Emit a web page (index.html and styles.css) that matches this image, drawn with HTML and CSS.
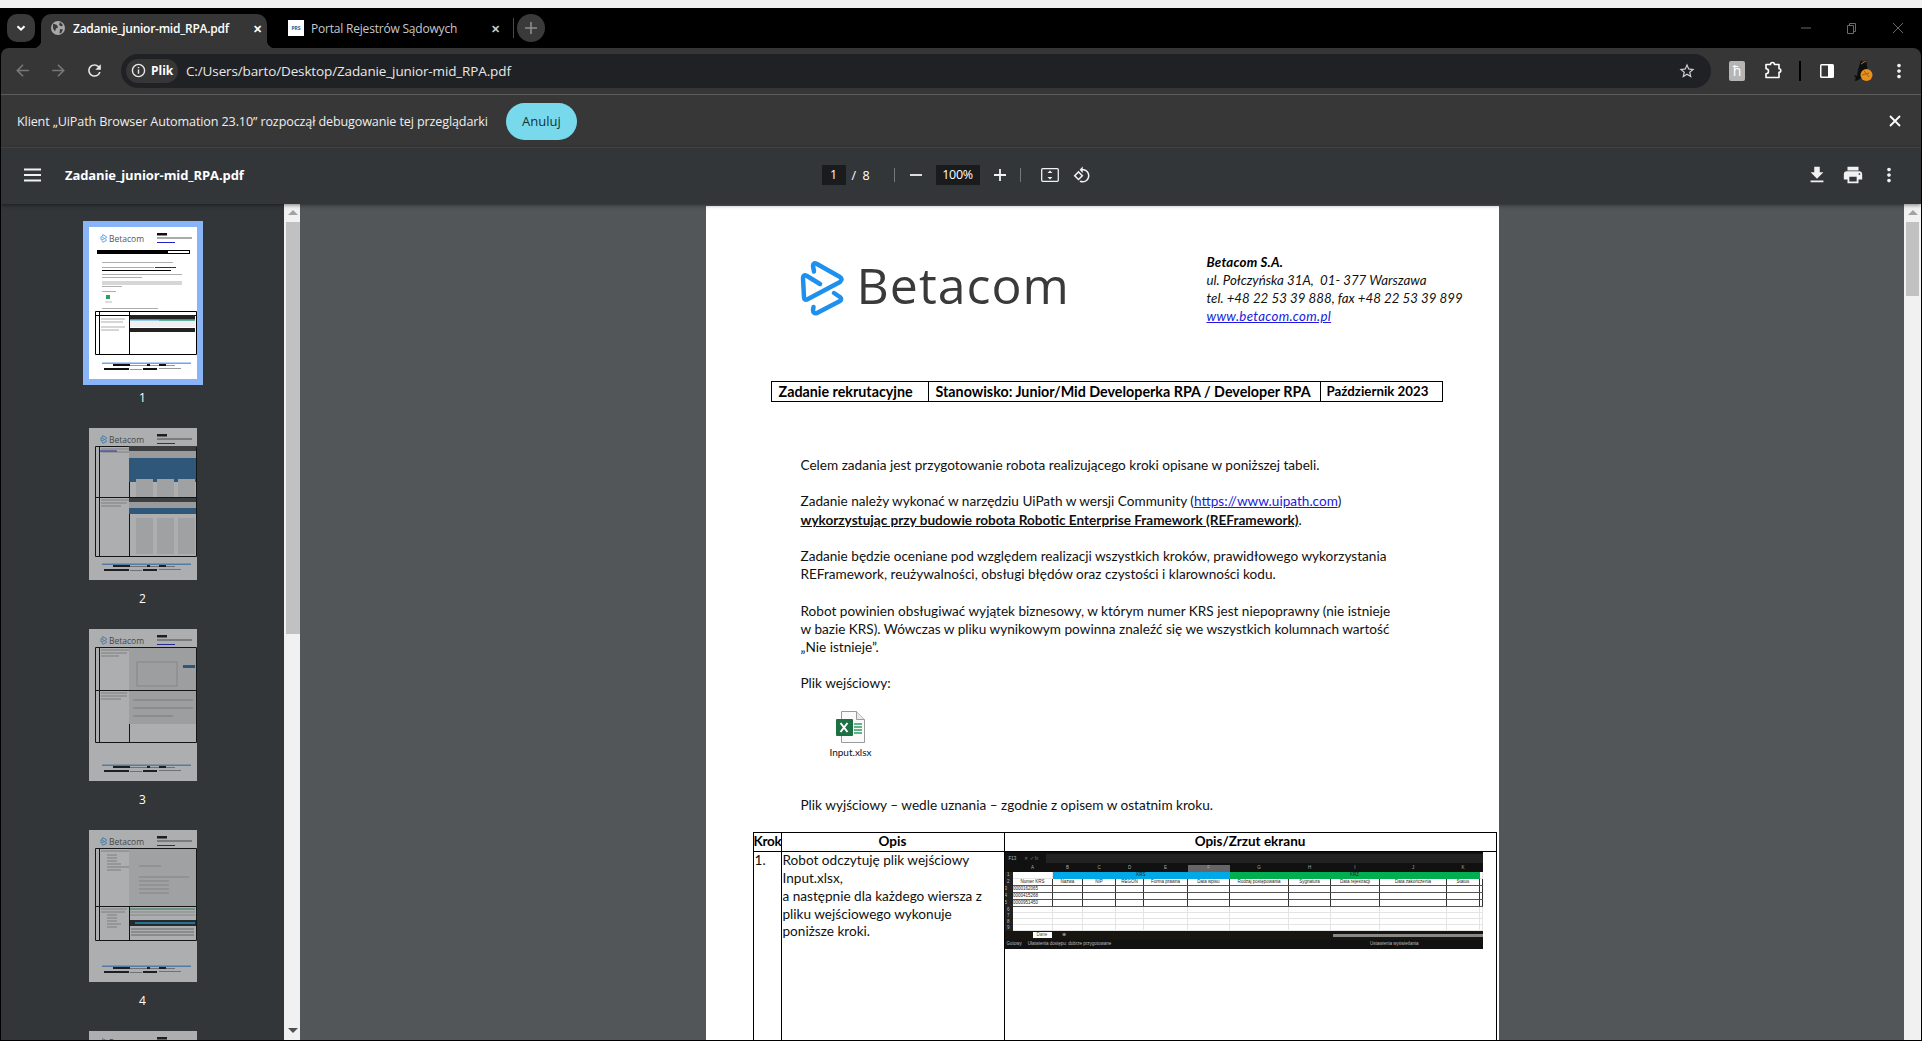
FILE: index.html
```html
<!DOCTYPE html>
<html lang="pl">
<head>
  <meta charset="UTF-8">
  <title>Zadanie_junior-mid_RPA.pdf</title>
  <link rel="stylesheet" href="styles.css">
</head>
<body>
  <svg class="sprite">
    <defs>
      <path id="logo-mark" d="M24 19.500L23 14q0-4 4-2l23 13q3 2 0 5L18 47q-4 2-4-2l-1-19q0-4 4-2l13 8M44 41l6 4q2 2 0 4L27 61q-4 1-4-3l.5-3" fill="none" stroke-linecap="round" stroke-linejoin="round"/>
      <symbol id="thumb-head" viewBox="0 0 108 152">
        <use href="#logo-mark" transform="translate(10 6) scale(.15)" stroke="#4a9be8" stroke-width="6"/>
        <text x="20" y="15" class="thumb-logo">Betacom</text>
        <rect x="68" y="6" width="10" height="2.500" fill="#111"/>
        <rect x="68" y="10" width="35" height="2" fill="#aaa"/>
        <rect x="68" y="15" width="18" height="1" fill="#2222cc"/>
      </symbol>
      <symbol id="thumb-foot" viewBox="0 0 108 152">
        <rect x="13" y="135.500" width="89" height="1.500" fill="#6fa8e8"/>
        <rect x="24" y="137" width="17" height="2" fill="#111"/>
        <rect x="41" y="138" width="45" height="1" fill="#999"/>
        <rect x="58" y="137" width="3" height="2" fill="#111"/>
        <rect x="70" y="137" width="7" height="2" fill="#111"/>
        <rect x="15" y="141" width="25" height="2" fill="#111"/>
        <rect x="41" y="142" width="12" height="1" fill="#999"/>
        <rect x="54" y="141" width="14" height="2" fill="#111"/>
        <rect x="70" y="141" width="22" height="1" fill="#999"/>
      </symbol>
      <symbol id="back" viewBox="0 0 24 24"><path d="M20 11H7.830l5.590-5.590L12 4l-8 8 8 8 1.410-1.410L7.830 13H20v-2z"/></symbol>
      <symbol id="dots" viewBox="0 0 24 24"><path d="M12 8c1.100 0 2-.9 2-2s-.9-2-2-2-2 .9-2 2 .9 2 2 2zm0 2c-1.100 0-2 .9-2 2s.9 2 2 2 2-.9 2-2-.9-2-2-2zm0 6c-1.100 0-2 .9-2 2s.9 2 2 2 2-.9 2-2-.9-2-2-2z"/></symbol>
    </defs>
  </svg>

  <div class="top-strip"></div>

  <header class="tabstrip">
    <button class="tab-search">
      <svg width="12" height="12" viewBox="0 0 12 12"><path d="M2.500 4.200L6 7.700l3.500-3.500" fill="none" stroke="#fff" stroke-width="2"/></svg>
    </button>
    <div class="tab tab-active">
      <svg class="favicon" width="16" height="16" viewBox="0 0 16 16"><circle cx="8" cy="8" r="7" fill="#a9a9a9"/><path d="M3 3.500l4 1.500 1 2.500-2 1-1 3-2-3zM10 2l3 3-1.500 1.500L9 5zM10 9l3 .5-2 4-1.500-.5z" fill="#3a3a3a"/></svg>
      <span class="tab-title">Zadanie_junior-mid_RPA.pdf</span>
      <span class="tab-close">✕</span>
    </div>
    <div class="tab">
      <span class="favicon prs-icon">PRS</span>
      <span class="tab-title tab-title-dim">Portal Rejestrów Sądowych</span>
      <span class="tab-close tab-close-dim">✕</span>
    </div>
    <span class="tab-sep"></span>
    <button class="new-tab">
      <svg width="14" height="14" viewBox="0 0 14 14"><path d="M7 1v12M1 7h12" stroke="#8d8d8d" stroke-width="1.600"/></svg>
    </button>
    <div class="win-controls">
      <svg width="46" height="16" viewBox="0 0 46 16"><path d="M18 8h10" stroke="#6b6b6b"/></svg>
      <svg width="46" height="16" viewBox="0 0 46 16"><path d="M18.500 5.500h6v8h-6zM20.500 5.500v-2h6v8h-2" fill="none" stroke="#6b6b6b"/></svg>
      <svg width="46" height="16" viewBox="0 0 46 16"><path d="M18 3l10 10M28 3L18 13" stroke="#6b6b6b"/></svg>
    </div>
  </header>

  <nav class="toolbar">
    <button class="tool-btn"><svg class="ic ic-off" viewBox="0 0 24 24"><use href="#back"/></svg></button>
    <button class="tool-btn"><svg class="ic ic-off ic-flip" viewBox="0 0 24 24"><use href="#back"/></svg></button>
    <button class="tool-btn"><svg class="ic" viewBox="0 0 24 24"><path d="M17.650 6.350A7.958 7.958 0 0 0 12 4c-4.420 0-7.990 3.580-7.990 8s3.570 8 7.990 8c3.730 0 6.840-2.550 7.730-6h-2.080A5.990 5.990 0 0 1 12 18c-3.310 0-6-2.690-6-6s2.690-6 6-6c1.660 0 3.140.690 4.220 1.780L13 11h7V4l-2.350 2.350z"/></svg></button>
    <div class="omnibox">
      <div class="chip">
        <svg width="15" height="15" viewBox="0 0 16 16"><circle cx="8" cy="8" r="6.500" fill="none" stroke="#e8e8e8" stroke-width="1.500"/><path d="M8 7v4.500M8 4.300v1.400" stroke="#e8e8e8" stroke-width="1.500"/></svg>
        <b>Plik</b>
      </div>
      <span class="url">C:/Users/barto/Desktop/Zadanie_junior-mid_RPA.pdf</span>
      <svg class="star" viewBox="0 0 24 24"><path d="M22 9.240l-7.190-.620L12 2 9.190 8.630 2 9.240l5.460 4.730L5.820 21 12 17.270 18.180 21l-1.630-7.030L22 9.240zM12 15.400l-3.760 2.270 1-4.280-3.320-2.880 4.380-.380L12 6.100l1.710 4.040 4.380.380-3.320 2.880 1 4.280L12 15.400z"/></svg>
    </div>
    <button class="tool-btn"><span class="ext-icon">ħ</span></button>
    <button class="tool-btn">
      <svg width="18" height="20" viewBox="0 0 18 20"><path d="M2 3.500h4.500a2 2 0 0 1 4 0H15v4.200a1.800 1.800 0 0 1 0 3.600v5.200H2v-3.800a2.400 2.400 0 0 0 0-5z" fill="none" stroke="#fff" stroke-width="1.600" stroke-linejoin="round"/></svg>
    </button>
    <span class="tool-sep"></span>
    <button class="tool-btn">
      <svg width="16" height="16" viewBox="0 0 16 16"><rect x="1" y="1" width="14" height="14" rx="1.500" fill="#fff"/><rect x="2.500" y="2.500" width="6.500" height="11" fill="#363636"/></svg>
    </button>
    <button class="tool-btn">
      <svg width="22" height="24" viewBox="0 0 22 24"><path d="M9 1l2 2 3-2 1 6 1 6-8 7-4 2-2-1 2-1-2-4 3 1 1-6z" fill="#0e0e0e"/><path d="M9 5l5-3" stroke="#b5701c"/><circle cx="14.500" cy="16" r="6" fill="#e8901c"/><path d="M12 12l5 6M10 16l7-2" stroke="#a8600f"/></svg>
    </button>
    <button class="tool-btn"><svg class="ic ic-dots" viewBox="0 0 24 24"><use href="#dots"/></svg></button>
  </nav>

  <div class="infobar">
    <span>Klient „UiPath Browser Automation 23.10” rozpoczął debugowanie tej przeglądarki</span>
    <button class="cancel-btn">Anuluj</button>
    <svg class="info-close" width="12" height="12" viewBox="0 0 12 12"><path d="M1 1l10 10M11 1L1 11" stroke="#fff" stroke-width="1.800"/></svg>
  </div>

  <div class="pdf-toolbar">
    <div class="pdf-left">
      <svg width="18" height="14" viewBox="0 0 18 14"><path d="M0 1.500h17M0 7h17M0 12.500h17" stroke="#f1f1f1" stroke-width="2"/></svg>
      <span class="pdf-title">Zadanie_junior-mid_RPA.pdf</span>
    </div>
    <div class="pdf-center">
      <span class="num-box num-page">1</span>
      <span class="page-total">/&nbsp;&nbsp;8</span>
      <span class="pdf-sep pdf-sep-a"></span>
      <svg class="zoom-ic" width="14" height="14" viewBox="0 0 14 14"><path d="M1 7h12" stroke="#f1f1f1" stroke-width="1.800"/></svg>
      <span class="num-box num-zoom">100%</span>
      <svg class="zoom-ic" width="14" height="14" viewBox="0 0 14 14"><path d="M1 7h12M7 1v12" stroke="#f1f1f1" stroke-width="1.800"/></svg>
      <span class="pdf-sep pdf-sep-b"></span>
      <svg class="fit-ic" width="18" height="14" viewBox="0 0 18 14"><rect x=".7" y=".7" width="16.600" height="12.600" rx="1" fill="none" stroke="#f1f1f1" stroke-width="1.300"/><path d="M9 2.500l2.500 2.500h-5zM9 11.500l2.500-2.500h-5z" fill="#f1f1f1"/></svg>
      <svg class="rot-ic" width="18" height="18" viewBox="0 0 24 24"><path fill="#f1f1f1" d="M7.340 6.410L.86 12.900l6.490 6.480 6.490-6.480-6.500-6.490zM3.690 12.900l3.660-3.660L11 12.900l-3.660 3.660-3.650-3.660zm15.670-6.260C17.610 4.880 15.300 4 13 4V.76L8.760 5 13 9.240V6c1.790 0 3.580.680 4.950 2.050 2.730 2.730 2.730 7.170 0 9.900C16.580 19.320 14.790 20 13 20c-.970 0-1.940-.210-2.840-.610l-1.490 1.490C10.020 21.620 11.510 22 13 22c2.300 0 4.610-.880 6.360-2.640 3.520-3.510 3.520-9.210 0-12.720z"/></svg>
    </div>
    <div class="pdf-right">
      <svg class="pdf-ic" viewBox="0 0 24 24"><path d="M19 9h-4V3H9v6H5l7 7 7-7zM5 18v2h14v-2H5z"/></svg>
      <svg class="pdf-ic" viewBox="0 0 24 24"><path d="M19 8H5c-1.660 0-3 1.340-3 3v6h4v4h12v-4h4v-6c0-1.660-1.340-3-3-3zm-3 11H8v-5h8v5zm3-7c-.550 0-1-.450-1-1s.450-1 1-1 1 .450 1 1-.450 1-1 1zm-1-9H6v4h12V3z"/></svg>
      <svg class="pdf-ic" viewBox="0 0 24 24"><use href="#dots"/></svg>
    </div>
  </div>

  <div class="viewer">
    <aside class="sidebar">
      <div class="thumb-item">
        <div class="thumb thumb-selected">
          <svg viewBox="0 0 108 152">
            <use href="#thumb-head"/>
            <rect x="8" y="23" width="93" height="4" fill="#000"/>
            <rect x="79" y="24" width="21" height="2" fill="#fff"/>
            <path d="M13 35.500h71M13 40.500h52M13 47.500h80M13 50.500h40M13 55h80M13 57h80M13 59.500h20M13 64.500h14M13 81.500h56" stroke="#777" stroke-width=".6"/>
            <path d="M66 40.500h21" stroke="#2222cc" stroke-width="1"/>
            <path d="M13 43.500h69" stroke="#000" stroke-width="1"/>
            <rect x="17" y="68" width="4" height="4" fill="#2f9e5f"/>
            <path d="M16 75h7" stroke="#bbb"/>
            <path d="M6.500 84.500h101v43H6.500zM10.500 84.500v43M40.500 84.500v43M6.500 88.500h101" fill="none" stroke="#000"/>
            <path d="M12 92h24M12 95h22M12 100h24M12 103h18" stroke="#777" stroke-width=".6"/>
            <rect x="41" y="88" width="65" height="4" fill="#222"/>
            <rect x="41" y="92" width="65" height="1.500" fill="#2b9ad4"/>
            <rect x="70" y="92" width="36" height="1.500" fill="#2ca05a"/>
            <path d="M41 95h65M41 97h65M41 99h65" stroke="#ccc" stroke-width=".6"/>
            <rect x="41" y="101" width="65" height="4" fill="#222"/>
            <use href="#thumb-foot"/>
          </svg>
        </div>
        <span class="thumb-num">1</span>
      </div>
      <div class="thumb-item">
        <div class="thumb">
          <svg viewBox="0 0 108 152">
            <use href="#thumb-head"/>
            <path d="M6.500 18.500h101v110H6.500zM10.500 18.500v110M40.500 18.500v110M6.500 69.500h101" fill="none" stroke="#000"/>
            <path d="M12 21h30M12 24h28M12 72h30M12 75h26M12 78h20" stroke="#777" stroke-width=".6"/>
            <path d="M11 23h17" stroke="#2222cc"/>
            <rect x="40" y="18" width="67" height="5" fill="#444"/>
            <rect x="40" y="23" width="67" height="7" fill="#ddd"/>
            <rect x="40" y="30" width="67" height="24" fill="#2e6da4"/>
            <rect x="47" y="51" width="17" height="18" fill="#e8e8e8"/>
            <rect x="68" y="51" width="17" height="18" fill="#e8e8e8"/>
            <rect x="89" y="51" width="17" height="18" fill="#e8e8e8"/>
            <rect x="40" y="70" width="67" height="4" fill="#444"/>
            <rect x="40" y="74" width="67" height="6" fill="#ddd"/>
            <rect x="40" y="80" width="67" height="6" fill="#2e6da4"/>
            <rect x="47" y="90" width="17" height="36" fill="#e8e8e8"/>
            <rect x="68" y="90" width="17" height="36" fill="#e8e8e8"/>
            <rect x="89" y="90" width="17" height="36" fill="#e8e8e8"/>
            <use href="#thumb-foot"/>
          </svg>
        </div>
        <span class="thumb-num">2</span>
      </div>
      <div class="thumb-item">
        <div class="thumb">
          <svg viewBox="0 0 108 152">
            <use href="#thumb-head"/>
            <path d="M6.500 18.500h101v95H6.500zM10.500 18.500v95M40.500 18.500v95M6.500 61.500h101" fill="none" stroke="#000"/>
            <path d="M12 21h28M12 24h26M12 27h18M12 64h26M12 67h26M12 70h20" stroke="#777" stroke-width=".6"/>
            <rect x="40" y="19" width="67" height="42" fill="#e4e4e4"/>
            <rect x="40" y="62" width="67" height="33" fill="#e4e4e4"/>
            <rect x="48" y="33" width="40" height="24" fill="none" stroke="#bbb"/>
            <rect x="94" y="36" width="12" height="3" fill="#2e6da4"/>
            <path d="M44 71h60M44 79h60M44 87h40" stroke="#aaa"/>
            <use href="#thumb-foot"/>
          </svg>
        </div>
        <span class="thumb-num">3</span>
      </div>
      <div class="thumb-item">
        <div class="thumb">
          <svg viewBox="0 0 108 152">
            <use href="#thumb-head"/>
            <path d="M6.500 18.500h101v92H6.500zM10.500 18.500v92M40.500 18.500v92M6.500 76.500h101" fill="none" stroke="#000"/>
            <path d="M12 21h28M18 25h10M18 28h10M18 31h10M18 34h14M18 37h24M18 40h14M12 79h26M12 82h24M18 85h10M18 88h10M18 91h10M18 94h14M18 97h10" stroke="#777" stroke-width=".6"/>
            <rect x="40" y="19" width="67" height="57" fill="#e8e8e8"/>
            <path d="M50 36h22M50 47h50M50 51h30M50 55h30M50 59h30M50 63h30" stroke="#999" stroke-width=".6"/>
            <path d="M41 79h65" stroke="#2ca05a"/>
            <path d="M41 82h65M41 85h65" stroke="#bbb"/>
            <rect x="41" y="90" width="66" height="6" fill="#222"/>
            <rect x="46" y="92" width="60" height="2" fill="#1d9ad4"/>
            <path d="M42 99h63M42 102h63M42 105h63" stroke="#888"/>
            <use href="#thumb-foot"/>
          </svg>
        </div>
        <span class="thumb-num">4</span>
      </div>
      <div class="thumb-item">
        <div class="thumb">
          <svg viewBox="0 0 108 152"><use href="#thumb-head"/></svg>
        </div>
      </div>
    </aside>

    <div class="scrollbar scrollbar-left">
      <span class="arrow-up"></span>
      <span class="scroll-thumb thumb-left"></span>
      <span class="arrow-down"></span>
    </div>

    <main class="pdf-main">
      <article class="page">
        <section class="letterhead">
          <div class="logo">
            <svg class="logo-icon" width="66" height="70" viewBox="0 0 66 70"><use href="#logo-mark" stroke="#1e90ee" stroke-width="4.500"/></svg>
            <span class="logo-text">Betacom</span>
          </div>
          <address class="company">
            <b>Betacom S.A.</b><br>
            ul. Połczyńska 31A,&nbsp; 01- 377 Warszawa<br>
            tel. +48 22 53 39 888, fax +48 22 53 39 899<br>
            <a href="#">www.betacom.com.pl</a>
          </address>
        </section>

        <table class="job-table">
          <tr>
            <td class="job-a">Zadanie rekrutacyjne</td>
            <td class="job-b">Stanowisko: Junior/Mid Developerka RPA / Developer RPA</td>
            <td class="job-c">Październik 2023</td>
          </tr>
        </table>

        <div class="body-text">
          <p>Celem zadania jest przygotowanie robota realizującego kroki opisane w poniższej tabeli.</p>
          <p>Zadanie należy wykonać w narzędziu UiPath w wersji Community (<a href="#">https://www.uipath.com</a>)<br>
          <b class="underline">wykorzystując przy budowie robota Robotic Enterprise Framework (REFramework)</b>.</p>
          <p>Zadanie będzie oceniane pod względem realizacji wszystkich kroków, prawidłowego wykorzystania<br>
          REFramework, reużywalności, obsługi błędów oraz czystości i klarowności kodu.</p>
          <p>Robot powinien obsługiwać wyjątek biznesowy, w którym numer KRS jest niepoprawny (nie istnieje<br>
          w bazie KRS). Wówczas w pliku wynikowym powinna znaleźć się we wszystkich kolumnach wartość<br>
          „Nie istnieje”.</p>
          <p>Plik wejściowy:</p>
          <div class="attachment">
            <svg width="30" height="32" viewBox="0 0 30 32"><path d="M5.500 .5h15l8 8v23h-23z" fill="#fafafa" stroke="#9a9a9a"/><path d="M20.500 .5v8h8" fill="#e8e8e8" stroke="#9a9a9a"/><path d="M18 13h8M18 16h8M18 19h8M18 22h8" stroke="#2f9e5f" stroke-width="1.500"/><rect x="0" y="8" width="17" height="17" rx="1" fill="#1d7044"/><path d="M4.500 12l7 9M11.500 12l-7 9" stroke="#fff" stroke-width="2"/></svg>
            <span>Input.xlsx</span>
          </div>
          <p>Plik wyjściowy – wedle uznania – zgodnie z opisem w ostatnim kroku.</p>
        </div>

        <table class="steps">
          <tr>
            <th class="col-step">Krok</th>
            <th class="col-desc">Opis</th>
            <th>Opis/Zrzut ekranu</th>
          </tr>
          <tr class="step-row">
            <td class="step-no">1.</td>
            <td>Robot odczytuję plik wejściowy Input.xlsx,<br>a następnie dla każdego wiersza z pliku wejściowego wykonuje poniższe kroki.</td>
            <td class="shot-cell">
              <div class="sheet">
                <div class="sheet-formula"><span>F13</span><span class="formula-marks">✕ ✓ fx</span><span class="formula-input"></span></div>
                <table class="sheet-grid">
                  <colgroup>
                    <col class="c-h"><col class="c-a"><col class="c-b"><col class="c-c"><col class="c-d"><col class="c-e"><col class="c-f"><col class="c-g"><col class="c-i-h"><col class="c-i"><col class="c-j"><col class="c-k"><col class="c-x">
                  </colgroup>
                  <tr class="sheet-cols"><td></td><td>A</td><td>B</td><td>C</td><td>D</td><td>E</td><td class="col-sel">F</td><td>G</td><td>H</td><td>I</td><td>J</td><td>K</td><td></td></tr>
                  <tr><td class="rh">1</td><td></td><td colspan="5" class="band-blue">KRS</td><td colspan="5" class="band-green">KRZ</td><td></td></tr>
                  <tr class="sheet-head"><td class="rh">2</td><td>Numer KRS</td><td>Nazwa</td><td>NIP</td><td>REGON</td><td>Forma prawna</td><td>Data wpisu</td><td>Rodzaj postępowania</td><td>Sygnatura</td><td>Data rejestracji</td><td>Data zakończenia</td><td>Status</td><td></td></tr>
                  <tr class="sheet-data"><td class="rh">3</td><td>0000162065</td><td></td><td></td><td></td><td></td><td></td><td></td><td></td><td></td><td></td><td></td><td></td></tr>
                  <tr class="sheet-data"><td class="rh">4</td><td>0000415268</td><td></td><td></td><td></td><td></td><td></td><td></td><td></td><td></td><td></td><td></td><td></td></tr>
                  <tr class="sheet-data"><td class="rh">5</td><td>0000951450</td><td></td><td></td><td></td><td></td><td></td><td></td><td></td><td></td><td></td><td></td><td></td></tr>
                  <tr class="sheet-empty"><td class="rh">6</td><td></td><td></td><td></td><td></td><td></td><td></td><td></td><td></td><td></td><td></td><td></td><td></td></tr>
                  <tr class="sheet-empty"><td class="rh">7</td><td></td><td></td><td></td><td></td><td></td><td></td><td></td><td></td><td></td><td></td><td></td><td></td></tr>
                  <tr class="sheet-empty"><td class="rh">8</td><td></td><td></td><td></td><td></td><td></td><td></td><td></td><td></td><td></td><td></td><td></td><td></td></tr>
                  <tr class="sheet-empty"><td class="rh">9</td><td></td><td></td><td></td><td></td><td></td><td></td><td></td><td></td><td></td><td></td><td></td><td></td></tr>
                </table>
                <div class="sheet-tabs"><span class="sheet-tab">Dane</span><span class="sheet-plus">⊕</span><span class="sheet-hscroll"></span></div>
                <div class="sheet-status"><span>Gotowy</span><span>Ułatwienia dostępu: dobrze przygotowane</span><span class="sheet-status-r">Ustawienia wyświetlania</span></div>
              </div>
            </td>
          </tr>
        </table>
      </article>
    </main>

    <div class="scrollbar scrollbar-right">
      <span class="arrow-up"></span>
      <span class="scroll-thumb thumb-right"></span>
    </div>
  </div>
</body>
</html>
```

FILE: styles.css
```css
* {
  box-sizing: border-box;
}

html, body {
  margin: 0;
  height: 100%;
  overflow: hidden;
}

body {
  display: flex;
  flex-direction: column;
  background: #000;
  padding: 0 1px 1px;
  font-family: "Open Sans", "Noto Sans", sans-serif;
  color: #fff;
}

button {
  border: none;
  background: none;
  padding: 0;
  font: inherit;
}

.sprite {
  display: none;
}

.top-strip {
  flex: none;
  height: 8px;
  margin: 0 -1px;
  background: #f1f1f1;
}

/* tabs */
.tabstrip {
  flex: none;
  height: 40px;
  display: flex;
  padding: 6px 0 0 6px;
  background: #000;
}

.tab-search {
  width: 28px;
  height: 28px;
  margin-right: 6px;
  border-radius: 10px;
  background: #3a3a3a;
  display: flex;
  align-items: center;
  justify-content: center;
}

.tab {
  position: relative;
  width: 226px;
  height: 34px;
  margin-right: 12px;
  padding: 0 1px 6px 9px;
  display: flex;
  align-items: center;
  border-radius: 10px 10px 0 0;
  font-size: 12px;
}

.tab-active {
  background: #363636;
}

.tab-active::before,
.tab-active::after {
  content: "";
  position: absolute;
  bottom: 0;
  width: 8px;
  height: 8px;
}

.tab-active::before {
  left: -8px;
  background: radial-gradient(circle at 0 0, transparent 8px, #363636 8.5px);
}

.tab-active::after {
  right: -8px;
  background: radial-gradient(circle at 100% 0, transparent 8px, #363636 8.5px);
}

.favicon {
  flex: none;
  width: 16px;
  height: 16px;
  margin-right: 7px;
}

.prs-icon {
  background: #fff;
  color: #2a5a8a;
  font-size: 5px;
  font-weight: 700;
  line-height: 16px;
  text-align: center;
}

.tab-title {
  flex: 1;
  white-space: nowrap;
  font-weight: 600;
  letter-spacing: -.26px;
}

.tab-title-dim {
  font-weight: 400;
  color: #c8c8c8;
  letter-spacing: -.2px;
}

.tab-close {
  font-size: 11px;
  font-weight: 700;
  width: 16px;
  text-align: center;
  margin-right: 1px;
}

.tab-close-dim {
  color: #c8c8c8;
}

.tab-sep {
  width: 1px;
  height: 20px;
  margin: 4px 3px 0 -4px;
  background: #4a4a4a;
}

.new-tab {
  width: 28px;
  height: 28px;
  border-radius: 50%;
  background: #3a3a3a;
  display: flex;
  align-items: center;
  justify-content: center;
}

.win-controls {
  margin-left: auto;
  margin-top: 6px;
  display: flex;
  height: 16px;
}

/* address bar */
.toolbar {
  flex: none;
  height: 47px;
  display: flex;
  align-items: center;
  padding: 0 4px 1px 3px;
  background: #363636;
  border-bottom: 1px solid #5c5c5c;
  border-radius: 8px 8px 0 0;
}

.tool-btn {
  flex: none;
  width: 36px;
  height: 36px;
  display: flex;
  align-items: center;
  justify-content: center;
}

.ic {
  width: 19px;
  height: 19px;
  fill: #e8e8e8;
}

.ic-off {
  fill: #777;
}

.ic-flip {
  transform: scaleX(-1);
}

.ic-dots {
  width: 22px;
  height: 22px;
  fill: #f1f1f1;
}

.omnibox {
  flex: 1;
  height: 34px;
  margin: 0 8px 0 9px;
  padding: 0 15px 0 5px;
  display: flex;
  align-items: center;
  border-radius: 17px;
  background: #202124;
}

.chip {
  height: 24px;
  width: 52px;
  padding-left: 5px;
  margin-right: 8px;
  display: flex;
  align-items: center;
  gap: 5px;
  border-radius: 12px;
  background: #363636;
  font-size: 12px;
}

.url {
  flex: 1;
  font-size: 13.500px;
  color: #e8e8e8;
  letter-spacing: -.13px;
}

.star {
  width: 18px;
  height: 18px;
  fill: #d0d0d0;
}

.ext-icon {
  width: 16px;
  height: 20px;
  border-radius: 2px;
  background: #b5b5b5;
  color: #fff;
  font-size: 14px;
  line-height: 20px;
  text-align: center;
}

.tool-sep {
  flex: none;
  width: 2px;
  height: 20px;
  margin: 0 8px;
  background: #000;
}

/* debug notice */
.infobar {
  flex: none;
  height: 53px;
  display: flex;
  align-items: center;
  padding: 0 20px 0 16px;
  background: #373737;
  border-bottom: 1px solid #4a4a4a;
  font-size: 12.600px;
  letter-spacing: -.13px;
  color: #eee;
}

.cancel-btn {
  width: 71px;
  height: 37px;
  margin-left: 18px;
  border-radius: 19px;
  background: #78d9ec;
  color: #12323a;
  font-size: 13px;
}

.info-close {
  margin-left: auto;
}

/* pdf toolbar */
.pdf-toolbar {
  position: relative;
  flex: none;
  height: 56px;
  padding-bottom: 2px;
  display: grid;
  grid-template-columns: 1fr auto 1fr;
  align-items: center;
  background: #323639;
  box-shadow: 0 1px 4px rgba(0, 0, 0, .5);
}

.pdf-left {
  display: flex;
  align-items: center;
  padding-left: 23px;
  gap: 23px;
}

.pdf-title {
  font-size: 13px;
  font-weight: 700;
  letter-spacing: -.1px;
}

.pdf-center {
  display: flex;
  align-items: center;
  margin-right: 10px;
  font-size: 12.500px;
}

.num-box {
  height: 20px;
  line-height: 20px;
  background: #191b1c;
  text-align: center;
}

.num-page {
  width: 24px;
}

.num-zoom {
  width: 44px;
  margin: 0 13px;
  letter-spacing: -.3px;
}

.page-total {
  width: 48px;
  padding-left: 6px;
}

.pdf-sep {
  width: 1px;
  height: 14px;
  background: #777;
}

.pdf-sep-a {
  margin-right: 14px;
}

.pdf-sep-b {
  margin: 0 20px 0 13px;
}

.zoom-ic {
  flex: none;
}

.fit-ic {
  margin-right: 14px;
}

.pdf-right {
  display: flex;
  justify-content: flex-end;
  gap: 14px;
  padding-right: 21px;
}

.pdf-ic {
  width: 22px;
  height: 22px;
  fill: #f1f1f1;
}

/* viewer */
.viewer {
  flex: 1;
  min-height: 0;
  display: flex;
  background: #525659;
}

.sidebar {
  flex: none;
  width: 283px;
  padding-top: 23px;
  overflow: hidden;
  display: flex;
  flex-direction: column;
  align-items: center;
  background: #323639;
}

.thumb-item {
  flex: none;
  display: flex;
  flex-direction: column;
  align-items: center;
}

.thumb {
  width: 108px;
  height: 152px;
  background: #fff;
  opacity: .6;
}

.thumb svg {
  display: block;
  width: 108px;
  height: 152px;
}

.thumb-selected {
  opacity: 1;
  outline: 6px solid #8ab4f8;
}

.thumb-logo {
  font-family: "Open Sans", sans-serif;
  font-size: 8.500px;
  fill: #555;
}

.thumb-num {
  height: 49px;
  padding-top: 11px;
  font-size: 12px;
  line-height: 16px;
}

.scrollbar {
  flex: none;
  display: flex;
  flex-direction: column;
  align-items: center;
  padding-top: 4px;
  background: #f1f1f1;
}

.scrollbar-left {
  width: 16px;
  padding-left: 2px;
}

.scrollbar-right {
  width: 17px;
}

.arrow-up {
  flex: none;
  width: 0;
  height: 0;
  margin: 2px 0 7px;
  border: 5px solid transparent;
  border-top: 0;
  border-bottom-color: #a3a3a3;
}

.arrow-down {
  flex: none;
  width: 0;
  height: 0;
  margin: auto 0 7px;
  border: 5px solid transparent;
  border-bottom: 0;
  border-top-color: #505050;
}

.scroll-thumb {
  flex: none;
  width: 13px;
  background: #c1c1c1;
}

.thumb-left {
  width: 14px;
  height: 412px;
}

.thumb-right {
  height: 74px;
}

.pdf-main {
  flex: 1;
  min-width: 0;
  display: flex;
  justify-content: center;
  overflow: hidden;
}

/* document */
.page {
  flex: none;
  width: 793px;
  height: 1122px;
  margin-top: 2px;
  background: #fff;
  color: #111;
  font-family: Lato, "Open Sans", sans-serif;
  font-size: 13.600px;
  line-height: 18.200px;
}

.letterhead {
  display: grid;
  grid-template-columns: 417px auto;
  padding: 46px 0 0 84px;
}

.logo {
  display: flex;
  align-items: center;
}

.logo-icon {
  margin-top: -4px;
}

.logo-text {
  margin: -8px 0 0 1px;
  font-family: "Open Sans", sans-serif;
  font-size: 50px;
  line-height: 70px;
  letter-spacing: 1px;
  color: #3a3a3a;
}

.company {
  margin-top: 1px;
  font-size: 13.300px;
  line-height: 18px;
}

.company b {
  color: #000;
  letter-spacing: .2px;
}

.company a {
  letter-spacing: .3px;
}

a {
  color: #1a1ae0;
}

.job-table {
  width: 672px;
  height: 21px;
  margin: 56px 0 0 65px;
  border-collapse: collapse;
  table-layout: fixed;
  font-weight: 700;
  font-size: 14.300px;
  line-height: 17px;
  color: #000;
}

.job-table td {
  padding: 0 0 0 7px;
  border: 1px solid #000;
  white-space: nowrap;
}

.job-a {
  width: 157px;
}

.job-b {
  width: 392px;
}

.job-table .job-c {
  font-size: 13.300px;
  padding-left: 6px;
}

.body-text {
  margin: 54px 0 0 95px;
}

.body-text p {
  margin: 0 0 18.200px;
  white-space: nowrap;
}

.underline {
  text-decoration: underline;
}

.attachment {
  width: 44px;
  margin: 0 0 37px 28px;
  display: flex;
  flex-direction: column;
  align-items: center;
  font-size: 10px;
  line-height: 14px;
}

.attachment svg {
  margin-bottom: 2px;
}

.steps {
  width: 744px;
  margin: 7px 0 0 47px;
  border-collapse: collapse;
  table-layout: fixed;
  color: #111;
  line-height: 17.800px;
}

.steps th,
.steps td {
  border: 1.500px solid #000;
  padding: 0 1px;
  vertical-align: top;
}

.steps th {
  height: 19px;
  font-size: 13.500px;
  line-height: 17px;
  font-weight: 700;
  text-align: center;
  color: #000;
}

.steps .col-step {
  width: 28px;
  padding: 0;
  letter-spacing: -.3px;
  text-align: left;
}

.col-desc {
  width: 223px;
}

.step-row {
  height: 400px;
}

.step-no {
  padding-left: 1px;
}

.steps .shot-cell {
  padding: 0;
}

/* excel screenshot in the table */
.sheet {
  width: 478px;
  height: 97px;
  display: flex;
  flex-direction: column;
  background: #111;
  color: #bbb;
  font-family: "Liberation Sans", sans-serif;
  font-size: 4.500px;
  line-height: 6px;
  overflow: hidden;
}

.sheet-formula {
  flex: none;
  height: 13px;
  display: flex;
  align-items: center;
  gap: 8px;
  padding: 0 0 0 4px;
}

.formula-marks {
  color: #777;
}

.formula-input {
  flex: 1;
  height: 9px;
  background: #222;
}

.sheet-grid {
  flex: none;
  width: 478px;
  border-collapse: collapse;
  table-layout: fixed;
  background: #fff;
}

.steps .sheet-grid td {
  height: 7px;
  padding: 0;
  border: 0;
  border-right: 1px solid #e4e4e4;
  border-bottom: 1px solid #e4e4e4;
  color: #222;
  text-align: center;
  vertical-align: middle;
  line-height: 5px;
  overflow: hidden;
  white-space: nowrap;
}

.steps .sheet-grid .sheet-cols td,
.steps .sheet-grid .sheet-empty td {
  height: 6px;
}

.c-h { width: 8px; }
.c-a { width: 40px; }
.c-b { width: 30px; }
.c-c { width: 33px; }
.c-d { width: 28px; }
.c-e { width: 44px; }
.c-f { width: 42px; }
.c-g { width: 59px; }
.c-i-h { width: 42px; }
.c-i { width: 49px; }
.c-j { width: 67px; }
.c-k { width: 33px; }

.steps .sheet-grid .sheet-cols td {
  background: #111;
  color: #aaa;
  border-color: #111;
}

.steps .sheet-grid .sheet-cols .col-sel {
  background: #666;
  border-color: #666;
}

.steps .sheet-grid .rh {
  background: #222;
  color: #bbb;
  border-color: #222;
}

.steps .sheet-grid .band-blue {
  background: #00a8e8;
  border-color: #00a8e8;
}

.steps .sheet-grid .band-green {
  background: #00ad4f;
  border-color: #00ad4f;
}

.steps .sheet-head td,
.steps .sheet-data td {
  border-right-color: #333;
  border-bottom-color: #555;
}

.steps .sheet-data td {
  text-align: left;
}

.sheet-tabs {
  flex: none;
  height: 9px;
  display: flex;
  align-items: center;
  background: #181510;
  padding-left: 28px;
}

.sheet-tab {
  width: 19px;
  background: #fff;
  color: #1d7044;
  text-align: center;
}

.sheet-plus {
  margin-left: 10px;
}

.sheet-hscroll {
  width: 150px;
  height: 3px;
  margin-left: auto;
  background: #888;
}

.sheet-status {
  flex: 1;
  display: flex;
  align-items: center;
  gap: 6px;
  padding-left: 2px;
}

.sheet-status-r {
  margin-left: auto;
  margin-right: 64px;
}
```
